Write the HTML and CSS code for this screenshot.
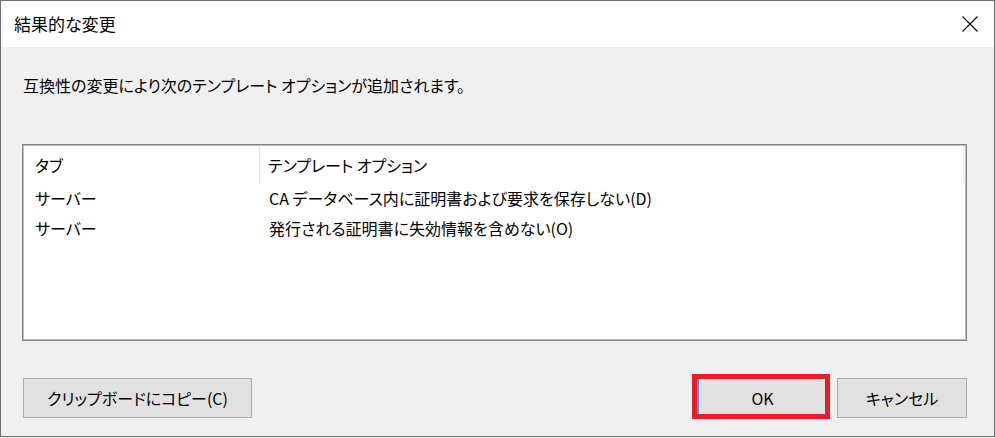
FILE: index.html
```html
<!DOCTYPE html>
<html lang="ja">
<head>
<meta charset="utf-8">
<title>結果的な変更</title>
<link rel="stylesheet" href="styles.css">
</head>
<body>
<div class="window">
  <div class="titlebar">
    <span class="title">結果的な変更</span>
    <svg class="close" width="16" height="16" viewBox="0 0 16 16" aria-hidden="true">
      <path d="M0.5 0.5 L15.5 15.5 M15.5 0.5 L0.5 15.5" stroke="#000" stroke-width="1.1" fill="none"/>
    </svg>
  </div>
  <div class="content">
    <p class="message">互換性の変更により次のテンプレート オプションが追加されます。</p>
    <div class="listbox">
      <div class="header">
        <div class="col col-tab">タブ</div>
        <div class="col col-opt">テンプレート オプション</div>
      </div>
      <div class="row">
        <div class="cell cell-tab">サーバー</div>
        <div class="cell cell-opt">CA データベース内に証明書および要求を保存しない(D)</div>
      </div>
      <div class="row">
        <div class="cell cell-tab">サーバー</div>
        <div class="cell cell-opt">発行される証明書に失効情報を含めない(O)</div>
      </div>
    </div>
    <div class="buttons">
      <button class="btn btn-copy">クリップボードにコピー(C)</button>
      <div class="right-buttons">
        <div class="ok-wrap">
          <button class="btn btn-ok">OK</button>
          <span class="highlight"></span>
        </div>
        <button class="btn btn-cancel">キャンセル</button>
      </div>
    </div>
  </div>
</div>
</body>
</html>
```

FILE: styles.css
```css
* { box-sizing: border-box; }

html, body {
  margin: 0;
  padding: 0;
  background: #f7f7f7;
}

body {
  font-family: "Noto Sans CJK JP", "Noto Sans", sans-serif;
  font-feature-settings: "palt";
  color: #000;
  width: 995px;
  height: 438px;
  overflow: hidden;
}

.window {
  width: 995px;
  height: 437px;
  border: 1px solid #6f6f6f;
  background: #f0f0f0;
  display: flex;
  flex-direction: column;
}

.titlebar {
  height: 46px;
  background: #fff;
  display: flex;
  align-items: center;
  justify-content: space-between;
  padding: 0 16px 0 13px;
  flex: none;
}

.title {
  font-size: 17px;
  line-height: 20px;
}

.close {
  display: block;
}

.content {
  flex: 1;
  padding: 0 27px 0 21px;
  display: flex;
  flex-direction: column;
}

.message {
  margin: 26px 0 0 1px;
  font-size: 16px;
  line-height: 24px;
  height: 24px;
}

.listbox {
  margin-top: 47px;
  height: 197px;
  background: #fff;
  border: 1px solid #828282;
  box-shadow: inset 0 0 0 1px #bdbdbd;
  padding: 1px;
  font-size: 16px;
}

.header {
  display: flex;
  height: 37px;
  align-items: stretch;
}

.col {
  display: flex;
  align-items: center;
}

.col-tab {
  width: 236px;
  padding-left: 11px;
  border-right: 1px solid #e5e5e5;
}

.col-opt {
  width: 704px;
  padding-left: 8px;
  border-right: 1px solid #e5e5e5;
}

.row {
  display: flex;
  height: 30px;
  align-items: center;
}

.cell-tab {
  width: 237px;
  padding-left: 11px;
}

.cell-opt {
  padding-left: 8px;
}

.buttons {
  margin-top: 37px;
  display: flex;
  justify-content: space-between;
  padding-left: 1px;
}

.right-buttons {
  display: flex;
  gap: 10px;
}

.btn {
  height: 40px;
  background: #e1e1e1;
  border: 1px solid #adadad;
  font-family: inherit;
  font-feature-settings: "palt";
  font-size: 16px;
  color: #000;
  padding: 0;
  margin: 0;
}

.btn-copy { width: 229px; }
.btn-cancel { width: 130px; }

.ok-wrap {
  position: relative;
  width: 130px;
  height: 40px;
}

.btn-ok {
  width: 130px;
  border-color: #0078d7;
  border-left: 2px solid #3d9be9;
}

.highlight {
  position: absolute;
  left: -5px;
  right: -3px;
  top: -4px;
  bottom: -1px;
  border: 5px solid #ed1c24;
}
```
